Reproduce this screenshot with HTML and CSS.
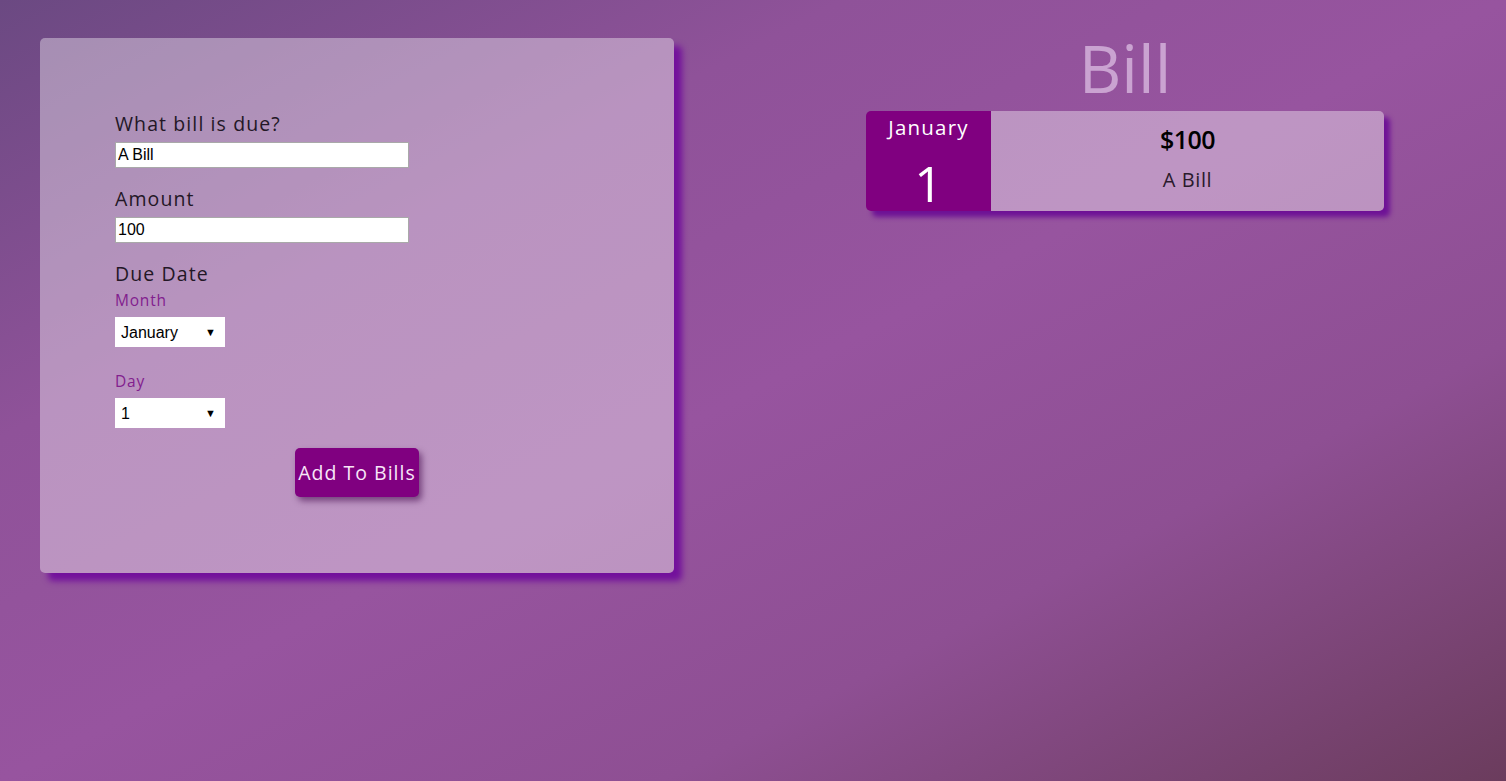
FILE: index.html
```
<!DOCTYPE html>
<html lang="en">
<head>
<meta charset="utf-8">
<title>Bills</title>
<link rel="stylesheet" href="styles.css">
</head>
<body>
<main class="page">
  <section class="form-card">
    <form class="bill-form">
      <label class="field-label" for="bill">What bill is due?</label>
      <input class="text-input" id="bill" type="text" value="A Bill">
      <label class="field-label gap" for="amount">Amount</label>
      <input class="text-input" id="amount" type="text" value="100">
      <div class="field-label gap-date">Due Date</div>
      <label class="sub-label" for="month">Month</label>
      <div class="select-wrap">
        <select class="select" id="month">
          <option>January</option>
          <option>February</option>
        </select>
      </div>
      <label class="sub-label gap-day" for="day">Day</label>
      <div class="select-wrap">
        <select class="select" id="day">
          <option>1</option>
          <option>2</option>
        </select>
      </div>
      <div class="actions">
        <button class="add-btn" type="button">Add To Bills</button>
      </div>
    </form>
  </section>
  <section class="bills">
    <h1 class="bills-title">Bill</h1>
    <div class="bill-card">
      <div class="bill-date">
        <div class="bill-month">January</div>
        <div class="bill-day">1</div>
      </div>
      <div class="bill-info">
        <div class="bill-amount">$100</div>
        <div class="bill-name">A Bill</div>
      </div>
    </div>
  </section>
</main>
</body>
</html>
```
FILE: styles.css
```
* { box-sizing: border-box; }
html, body { height: 100%; }
body {
  margin: 0;
  font-family: "Open Sans", "Noto Sans", sans-serif;
  background: linear-gradient(to bottom right, #6b4982 0%, #8f5299 28%, #97549f 50%, #8e4f93 72%, #6b3c5d 100%);
  min-height: 781px;
}
.page {
  display: flex;
  align-items: flex-start;
  padding: 38px 0 0 40px;
}
.form-card {
  width: 634px;
  height: 535px;
  flex: none;
  background: rgba(255, 255, 255, 0.38);
  border-radius: 5px;
  box-shadow: 8px 8px 6px #73119c;
  padding: 74px 75px 0;
}
.bill-form { display: flex; flex-direction: column; align-items: flex-start; }
.field-label {
  display: block;
  font-size: 19.5px;
  line-height: 24px;
  color: #231726;
  letter-spacing: 1.1px;
}
.field-label.gap { margin-top: 19px; }
.field-label.gap-date { margin-top: 19px; }
.text-input {
  margin-top: 6px;
  width: 294px;
  height: 26px;
  border: 1px solid #a9a9a9;
  background: #fff;
  font-family: "Liberation Sans", Arial, sans-serif;
  font-size: 16px;
  padding: 1px 2px;
  color: #000;
}
.sub-label {
  display: block;
  font-size: 15.5px;
  line-height: 20px;
  color: #82208e;
  margin-top: 4px;
  letter-spacing: 0.8px;
}
.sub-label.gap-day { margin-top: 24px; }
.select-wrap {
  position: relative;
  margin-top: 7px;
  width: 110px;
  height: 30px;
}
.select-wrap::after {
  content: "\25BC";
  position: absolute;
  right: 9px;
  top: 9px;
  font-size: 11px;
  line-height: 12px;
  color: #000;
  pointer-events: none;
}
.select {
  appearance: none;
  -webkit-appearance: none;
  width: 110px;
  height: 30px;
  border: none;
  border-radius: 0;
  background: #fff;
  font-family: "Liberation Sans", Arial, sans-serif;
  font-size: 16px;
  padding: 0 0 0 6px;
  color: #000;
}
.actions {
  align-self: stretch;
  display: flex;
  justify-content: center;
  margin-top: 20px;
}
.add-btn {
  width: 124px;
  height: 49px;
  background: #800080;
  color: #f8e6f8;
  border: none;
  border-radius: 5px;
  font-family: "Open Sans", "Noto Sans", sans-serif;
  font-size: 19.5px;
  letter-spacing: 1px;
  padding: 0;
  box-shadow: 3px 4px 6px rgba(60, 0, 70, 0.55);
}
.bills {
  flex: 1;
  margin-left: 70px;
  display: flex;
  flex-direction: column;
  align-items: center;
}
.bills-title {
  margin: 0;
  margin-top: -11px;
  font-size: 66px;
  line-height: 80px;
  font-weight: 400;
  color: #caa3d1;
}
.bill-card {
  margin-top: 4px;
  width: 518px;
  height: 100px;
  display: flex;
  border-radius: 5px;
  box-shadow: 6px 6px 5px #6e1296;
}
.bill-date {
  width: 125px;
  background: #800080;
  color: #fff;
  border-radius: 5px 0 0 5px;
  display: flex;
  flex-direction: column;
  align-items: center;
}
.bill-month {
  margin-top: 2px;
  font-size: 20.5px;
  line-height: 28px;
  letter-spacing: 1.2px;
}
.bill-day {
  margin-top: 20px;
  font-size: 50px;
  line-height: 44px;
}
.bill-info {
  flex: 1;
  background: rgba(255, 255, 255, 0.38);
  border-radius: 0 5px 5px 0;
  display: flex;
  flex-direction: column;
  align-items: center;
}
.bill-amount {
  margin-top: 12px;
  font-size: 25px;
  line-height: 32px;
  font-weight: 600;
  color: #000;
  letter-spacing: -0.5px;
}
.bill-name {
  margin-top: 12px;
  font-size: 20px;
  line-height: 26px;
  color: #2a1a2c;
  letter-spacing: 0.6px;
}
```
